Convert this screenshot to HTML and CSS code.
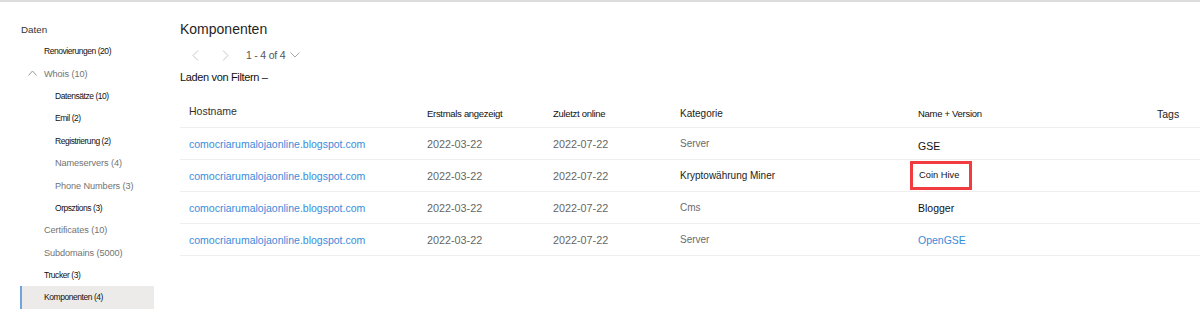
FILE: index.html
```html
<!DOCTYPE html>
<html lang="de">
<head>
    <meta charset="UTF-8">
    <meta name="viewport" content="width=device-width, initial-scale=1.0">
    <title>Komponenten</title>
    <link rel="stylesheet" href="styles.css">
</head>
<body>
    <div class="page">
        <nav class="sidebar">
            <div class="nav-title">Daten</div>
            <ul class="nav-list">
                <li class="nav-item lvl1 dark">Renovierungen (20)</li>
                <li class="nav-item lvl1 grey">
                    <svg class="nav-chevron" width="9" height="6" viewBox="0 0 9 6"><path d="M0.5 5.5 L4.5 1 L8.5 5.5" fill="none" stroke="#9a9a9a" stroke-width="1"/></svg>
                    Whois (10)
                </li>
                <li class="nav-item lvl2 dark">Datensätze (10)</li>
                <li class="nav-item lvl2 dark">Emil (2)</li>
                <li class="nav-item lvl2 dark">Registrierung (2)</li>
                <li class="nav-item lvl2 grey">Nameservers (4)</li>
                <li class="nav-item lvl2 grey">Phone Numbers (3)</li>
                <li class="nav-item lvl2 dark">Orpsztions (3)</li>
                <li class="nav-item lvl1 grey">Certificates (10)</li>
                <li class="nav-item lvl1 grey">Subdomains (5000)</li>
                <li class="nav-item lvl1 dark">Trucker (3)</li>
                <li class="nav-item lvl1 dark selected">Komponenten (4)</li>
            </ul>
        </nav>

        <main class="content">
            <h1>Komponenten</h1>

            <div class="pager">
                <span class="pager-btn">
                    <svg width="7" height="11" viewBox="0 0 7 11"><path d="M6 0.5 L1 5.5 L6 10.5" fill="none" stroke="#c6c6c6" stroke-width="1"/></svg>
                </span>
                <span class="pager-btn">
                    <svg width="7" height="11" viewBox="0 0 7 11"><path d="M1 0.5 L6 5.5 L1 10.5" fill="none" stroke="#c6c6c6" stroke-width="1"/></svg>
                </span>
                <span class="pager-count">1 - 4 of 4</span>
                <svg class="pager-drop" width="10" height="6" viewBox="0 0 10 6"><path d="M0.5 0.5 L5 5 L9.5 0.5" fill="none" stroke="#a8a8a8" stroke-width="1"/></svg>
            </div>

            <div class="filter-line">Laden von Filtern –</div>

            <div class="table">
                <div class="row head">
                    <div class="cell h-main">Hostname</div>
                    <div class="cell h-small">Erstmals angezeigt</div>
                    <div class="cell h-small">Zuletzt online</div>
                    <div class="cell h-norm">Kategorie</div>
                    <div class="cell h-small">Name + Version</div>
                    <div class="cell h-tags">Tags</div>
                </div>

                <div class="row">
                    <div class="cell"><a class="host" href="#">comocriarumalojaonline.blogspot.com</a></div>
                    <div class="cell date">2022-03-22</div>
                    <div class="cell date">2022-07-22</div>
                    <div class="cell cat">Server</div>
                    <div class="cell name low">GSE</div>
                    <div class="cell"></div>
                </div>

                <div class="row">
                    <div class="cell"><a class="host" href="#">comocriarumalojaonline.blogspot.com</a></div>
                    <div class="cell date">2022-03-22</div>
                    <div class="cell date">2022-07-22</div>
                    <div class="cell cat strong">Kryptowährung Miner</div>
                    <div class="cell name"><span class="marked">Coin Hive</span></div>
                    <div class="cell"></div>
                </div>

                <div class="row">
                    <div class="cell"><a class="host" href="#">comocriarumalojaonline.blogspot.com</a></div>
                    <div class="cell date">2022-03-22</div>
                    <div class="cell date">2022-07-22</div>
                    <div class="cell cat">Cms</div>
                    <div class="cell name">Blogger</div>
                    <div class="cell"></div>
                </div>

                <div class="row">
                    <div class="cell"><a class="host" href="#">comocriarumalojaonline.blogspot.com</a></div>
                    <div class="cell date">2022-03-22</div>
                    <div class="cell date">2022-07-22</div>
                    <div class="cell cat">Server</div>
                    <div class="cell name link">OpenGSE</div>
                    <div class="cell"></div>
                </div>
            </div>
        </main>
    </div>
</body>
</html>
```

FILE: styles.css
```css
body {
    margin: 0;
    font-family: "Liberation Sans", Arial, sans-serif;
    background-color: #ffffff;
    color: #222;
    border-top: 2px solid #dcdcdc;
}

.page {
    display: flex;
    align-items: flex-start;
}

/* left navigation */
.sidebar {
    width: 134px;
    margin-left: 20px;
    padding-top: 18px;
}

.nav-title {
    height: 20px;
    line-height: 20px;
    padding-left: 1px;
    font-size: 9.8px;
    color: #333;
}

.nav-list {
    list-style: none;
    margin: 0;
    padding: 0;
}

.nav-item {
    position: relative;
    height: 22.4px;
    display: flex;
    align-items: center;
    box-sizing: border-box;
    white-space: nowrap;
}

.nav-item.lvl1 {
    padding-left: 24px;
}

.nav-item.lvl2 {
    padding-left: 35px;
}

.nav-item.dark {
    font-size: 8.5px;
    letter-spacing: -0.45px;
    color: #111;
}

.nav-item.grey {
    font-size: 9.2px;
    letter-spacing: -0.1px;
    color: #737373;
}

.nav-chevron {
    position: absolute;
    left: 8px;
    top: 8px;
}

.nav-item.selected {
    background-color: #edebe9;
    border-left: 2px solid #6ea6dc;
    padding-left: 22px;
}

/* main area */
.content {
    flex: 1;
    margin-left: 26px;
    padding-top: 16px;
}

h1 {
    margin: 0;
    height: 22px;
    line-height: 22px;
    font-size: 14px;
    font-weight: normal;
    color: #1f1f1f;
}

.pager {
    display: flex;
    align-items: center;
    height: 20px;
    margin-top: 5px;
}

.pager-btn {
    display: flex;
    align-items: center;
    justify-content: center;
    width: 24px;
    height: 20px;
    margin-left: 3px;
}

.pager-btn + .pager-btn {
    margin-left: 6px;
}

.pager-count {
    margin-left: 9px;
    font-size: 10.5px;
    letter-spacing: -0.2px;
    color: #555;
}

.pager-drop {
    margin-left: 5px;
}

.filter-line {
    height: 20px;
    line-height: 20px;
    margin-top: 2px;
    font-size: 11px;
    letter-spacing: -0.35px;
    color: #111;
}

/* table */
.table {
    margin-top: 10px;
}

.row {
    display: grid;
    grid-template-columns: 238px 126px 127px 238px 239px 1fr;
    height: 32px;
    border-bottom: 1px solid #efefef;
    box-sizing: border-box;
}

.row.head {
    height: 31px;
}

.cell {
    display: flex;
    align-items: center;
    padding-left: 9px;
    font-size: 10.5px;
    white-space: nowrap;
}

.h-main {
    color: #323130;
    font-size: 10.5px;
    padding-bottom: 2px;
}

.h-small {
    font-size: 9.5px;
    letter-spacing: -0.3px;
    color: #111;
    padding-top: 3px;
}

.h-norm {
    font-size: 10px;
    color: #222;
    padding-top: 3px;
}

.h-tags {
    font-size: 10.5px;
    color: #222;
    padding-top: 3px;
}

.host {
    color: #3a8bd8;
    text-decoration: none;
    font-size: 10.5px;
}

.date {
    font-size: 10.8px;
    color: #666;
}

.cat {
    font-size: 10px;
    color: #6b6b6b;
}

.cat.strong {
    color: #1c1c1c;
}

.name {
    font-size: 10.5px;
    color: #111;
}

.name.low {
    padding-top: 4px;
}

.name.link {
    color: #3a8bd8;
}

.marked {
    display: inline-block;
    height: 29px;
    line-height: 23px;
    margin-left: -8px;
    padding: 0 10px 0 6px;
    border: 3px solid #f03b3f;
    box-sizing: border-box;
    font-size: 9.3px;
    color: #111;
}
```
